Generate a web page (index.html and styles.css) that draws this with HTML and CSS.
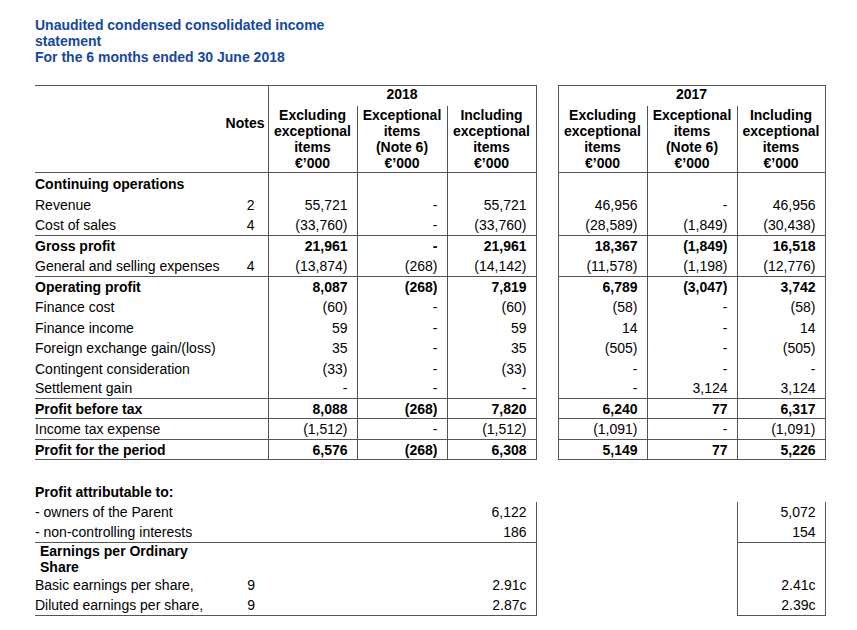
FILE: index.html
```html
<!DOCTYPE html>
<html lang="en">
<head>
<meta charset="utf-8">
<title>Unaudited condensed consolidated income statement</title>
<link rel="stylesheet" href="styles.css">
</head>
<body>
<div class="page">
  <h1 class="title">Unaudited condensed consolidated income<br>statement<br>For the 6 months ended 30 June 2018</h1>
  <table class="stmt">
    <colgroup>
      <col class="w-lbl"><col class="w-notes"><col class="w-c1"><col class="w-c2"><col class="w-c3"><col class="w-gap"><col class="w-c1"><col class="w-c2"><col class="w-d3">
    </colgroup>
    <thead>
      <tr class="yr">
        <th class="lbl hb top" rowspan="2"></th>
        <th class="notes-h hb top" rowspan="2">Notes</th>
        <th class="year box" colspan="3">2018</th>
        <th class="gap" rowspan="2"></th>
        <th class="year box" colspan="3">2017</th>
      </tr>
      <tr class="sub">
        <th class="h box">Excluding<br>exceptional<br>items<br>€’000</th>
        <th class="h box">Exceptional<br>items<br>(Note 6)<br>€’000</th>
        <th class="h box">Including<br>exceptional<br>items<br>€’000</th>
        <th class="h box">Excluding<br>exceptional<br>items<br>€’000</th>
        <th class="h box">Exceptional<br>items<br>(Note 6)<br>€’000</th>
        <th class="h box">Including<br>exceptional<br>items<br>€’000</th>
      </tr>
    </thead>
    <tbody class="main">
      <tr class="t22"><td class="lbl b">Continuing operations</td><td class="n"></td><td class="v"></td><td class="v"></td><td class="v"></td><td class="gap"></td><td class="v"></td><td class="v"></td><td class="v"></td></tr>
      <tr class="t20"><td class="lbl">Revenue</td><td class="n">2</td><td class="v">55,721</td><td class="v">-</td><td class="v">55,721</td><td class="gap"></td><td class="v">46,956</td><td class="v">-</td><td class="v">46,956</td></tr>
      <tr class="t21 rule"><td class="lbl">Cost of sales</td><td class="n">4</td><td class="v">(33,760)</td><td class="v">-</td><td class="v">(33,760)</td><td class="gap"></td><td class="v">(28,589)</td><td class="v">(1,849)</td><td class="v">(30,438)</td></tr>
      <tr class="b"><td class="lbl">Gross profit</td><td class="n"></td><td class="v">21,961</td><td class="v">-</td><td class="v">21,961</td><td class="gap"></td><td class="v">18,367</td><td class="v">(1,849)</td><td class="v">16,518</td></tr>
      <tr class="t21 rule"><td class="lbl">General and selling expenses</td><td class="n">4</td><td class="v">(13,874)</td><td class="v">(268)</td><td class="v">(14,142)</td><td class="gap"></td><td class="v">(11,578)</td><td class="v">(1,198)</td><td class="v">(12,776)</td></tr>
      <tr class="b"><td class="lbl">Operating profit</td><td class="n"></td><td class="v">8,087</td><td class="v">(268)</td><td class="v">7,819</td><td class="gap"></td><td class="v">6,789</td><td class="v">(3,047)</td><td class="v">3,742</td></tr>
      <tr class="t21"><td class="lbl">Finance cost</td><td class="n"></td><td class="v">(60)</td><td class="v">-</td><td class="v">(60)</td><td class="gap"></td><td class="v">(58)</td><td class="v">-</td><td class="v">(58)</td></tr>
      <tr><td class="lbl">Finance income</td><td class="n"></td><td class="v">59</td><td class="v">-</td><td class="v">59</td><td class="gap"></td><td class="v">14</td><td class="v">-</td><td class="v">14</td></tr>
      <tr class="t21"><td class="lbl">Foreign exchange gain/(loss)</td><td class="n"></td><td class="v">35</td><td class="v">-</td><td class="v">35</td><td class="gap"></td><td class="v">(505)</td><td class="v">-</td><td class="v">(505)</td></tr>
      <tr><td class="lbl">Contingent consideration</td><td class="n"></td><td class="v">(33)</td><td class="v">-</td><td class="v">(33)</td><td class="gap"></td><td class="v">-</td><td class="v">-</td><td class="v">-</td></tr>
      <tr class="rule"><td class="lbl">Settlement gain</td><td class="n"></td><td class="v">-</td><td class="v">-</td><td class="v">-</td><td class="gap"></td><td class="v">-</td><td class="v">3,124</td><td class="v">3,124</td></tr>
      <tr class="rule b"><td class="lbl">Profit before tax</td><td class="n"></td><td class="v">8,088</td><td class="v">(268)</td><td class="v">7,820</td><td class="gap"></td><td class="v">6,240</td><td class="v">77</td><td class="v">6,317</td></tr>
      <tr class="t21 rule"><td class="lbl">Income tax expense</td><td class="n"></td><td class="v">(1,512)</td><td class="v">-</td><td class="v">(1,512)</td><td class="gap"></td><td class="v">(1,091)</td><td class="v">-</td><td class="v">(1,091)</td></tr>
      <tr class="rule b"><td class="lbl">Profit for the period</td><td class="n"></td><td class="v">6,576</td><td class="v">(268)</td><td class="v">6,308</td><td class="gap"></td><td class="v">5,149</td><td class="v">77</td><td class="v">5,226</td></tr>
    </tbody>
    <tbody class="attr">
      <tr class="spacer"><td colspan="9"></td></tr>
      <tr class="b"><td class="lbl" colspan="2">Profit attributable to:</td><td></td><td></td><td></td><td class="gap"></td><td></td><td></td><td></td></tr>
      <tr><td class="lbl">- owners of the Parent</td><td class="n"></td><td class="v"></td><td class="v"></td><td class="v e18">6,122</td><td class="gap"></td><td class="v"></td><td class="v"></td><td class="v e17">5,072</td></tr>
      <tr class="rule2"><td class="lbl">- non-controlling interests</td><td class="n"></td><td class="v"></td><td class="v"></td><td class="v e18">186</td><td class="gap"></td><td class="v"></td><td class="v"></td><td class="v e17">154</td></tr>
      <tr class="eps"><td class="lbl b indent">Earnings per Ordinary<br>Share</td><td class="n"></td><td class="v"></td><td class="v"></td><td class="v e18"></td><td class="gap"></td><td class="v"></td><td class="v"></td><td class="v e17"></td></tr>
      <tr class="t21"><td class="lbl">Basic earnings per share,</td><td class="n">9</td><td class="v"></td><td class="v"></td><td class="v e18">2.91c</td><td class="gap"></td><td class="v"></td><td class="v"></td><td class="v e17">2.41c</td></tr>
      <tr class="rule2"><td class="lbl">Diluted earnings per share,</td><td class="n">9</td><td class="v"></td><td class="v"></td><td class="v e18">2.87c</td><td class="gap"></td><td class="v"></td><td class="v"></td><td class="v e17">2.39c</td></tr>
    </tbody>
  </table>
</div>
</body>
</html>
```

FILE: styles.css
```css
html, body {
  margin: 0;
  padding: 0;
  background: #ffffff;
}

body {
  font-family: "Liberation Sans", Arial, Helvetica, sans-serif;
  color: #000000;
}

.page {
  padding: 17px 0 0 35px;
}

.title {
  margin: 0;
  color: #16479f;
  font-size: 14px;
  line-height: 16px;
  font-weight: bold;
}

.stmt {
  margin-top: 20px;
  border-collapse: collapse;
  table-layout: fixed;
  width: 790px;
  font-size: 14px;
  line-height: 16px;
}

.w-lbl { width: 185px; }
.w-notes { width: 48px; }
.w-c1 { width: 89px; }
.w-c2 { width: 90px; }
.w-c3 { width: 89px; }
.w-gap { width: 22px; }
.w-d3 { width: 88px; }

.stmt th,
.stmt td {
  padding: 0;
  white-space: nowrap;
}

/* header */
.top { border-top: 1px solid #555; }
.hb { border-bottom: 1px solid #555; }

.year {
  height: 20px;
  vertical-align: top;
  text-align: center;
  font-weight: bold;
}

.box {
  border: 1px solid #555;
}

.yr .year {
  border-bottom: none;
}

.sub .h {
  border-top: none;
  height: 65px;
  padding-top: 1px;
  vertical-align: top;
  text-align: center;
  font-weight: bold;
  line-height: 16px;
}

.notes-h {
  vertical-align: top;
  text-align: right;
  padding-top: 29px !important;
  padding-right: 3px !important;
  font-weight: bold;
}

.gap {
  border: none;
}

/* body rows */
.stmt tbody tr { height: 20px; }
.stmt tbody tr.t21 { height: 21px; }
.stmt tbody tr.t22 { height: 22px; }
.stmt tbody tr.t20 { height: 20px; }

.lbl {
  text-align: left;
  vertical-align: middle;
}

.indent { padding-left: 5px !important; }

.n {
  text-align: right;
  padding-right: 13px !important;
}

.v {
  text-align: right;
  padding-right: 9px !important;
}

.main .v {
  border-left: 1px solid #555;
  border-right: 1px solid #555;
}

.main tr:last-child .v {
  border-bottom: 1px solid #555;
}

.b td { font-weight: bold; }
td.b { font-weight: bold; }

.main .rule td:not(.gap) {
  border-bottom: 1px solid #555;
}

/* attributable section */
.attr .spacer { height: 22px; }
.attr .spacer td { height: 22px; }

.attr .e18 { border-right: 1px solid #555; }
.attr .e17 {
  border-left: 1px solid #555;
  border-right: 1px solid #555;
}

.attr .rule2 .lbl,
.attr .rule2 .n,
.attr .rule2 td:nth-child(3),
.attr .rule2 td:nth-child(4),
.attr .rule2 .e18,
.attr .rule2 .e17 {
  border-bottom: 1px solid #555;
}

.attr .eps { height: 32px; }
```
